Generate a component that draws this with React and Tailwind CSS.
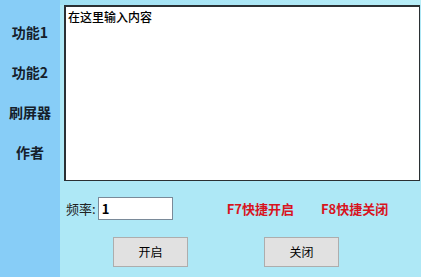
import React from 'react';

const font = { fontFamily: '"Noto Sans CJK SC", "Liberation Sans", sans-serif' };

const App = () => {
    return (
        <div className="flex w-[421px] h-[277px] overflow-hidden bg-[#aee8f6]" style={font}>
            {/* Sidebar */}
            <div className="w-[60px] h-full bg-[#87cdf7] flex flex-col items-center pt-[22px] gap-[19px]">
                {['功能1', '功能2', '刷屏器', '作者'].map((t) => (
                    <div key={t} className="h-[21px] leading-[21px] text-[14px] font-bold text-[#15202b]">{t}</div>
                ))}
            </div>

            {/* Main */}
            <div className="flex-1 flex flex-col">
                <div className="h-[5px] bg-gradient-to-r from-[#9fe0f4] to-[#b8eef8]" />
                <div className="ml-[4px] mr-[1px] h-[176px] bg-white border border-[#2b3033] border-t-2 border-l-2 px-[2px] pt-[2px]">
                    <div className="text-[12px] leading-[16px] text-black font-medium">在这里输入内容</div>
                </div>
                <div className="flex items-center mt-[16px] h-[23px]">
                    <span className="ml-[6px] text-[13px] text-[#222]">频率:</span>
                    <div className="ml-[2px] w-[75px] h-[23px] bg-white border border-[#7a8a99] flex items-center px-[3px] text-[13px] font-bold text-black">1</div>
                    <span className="ml-[54px] text-[13px] font-bold text-[#d8141e]">F7快捷开启</span>
                    <span className="ml-[27px] text-[13px] font-bold text-[#d8141e]">F8快捷关闭</span>
                </div>
                <div className="flex mt-[17px]">
                    <button className="ml-[53px] w-[75px] h-[30px] bg-[#e1e1e1] border border-[#adadad] text-[12px] text-black">开启</button>
                    <button className="ml-[76px] w-[75px] h-[30px] bg-[#e1e1e1] border border-[#adadad] text-[12px] text-black">关闭</button>
                </div>
            </div>
        </div>
    );
};

export default App;
